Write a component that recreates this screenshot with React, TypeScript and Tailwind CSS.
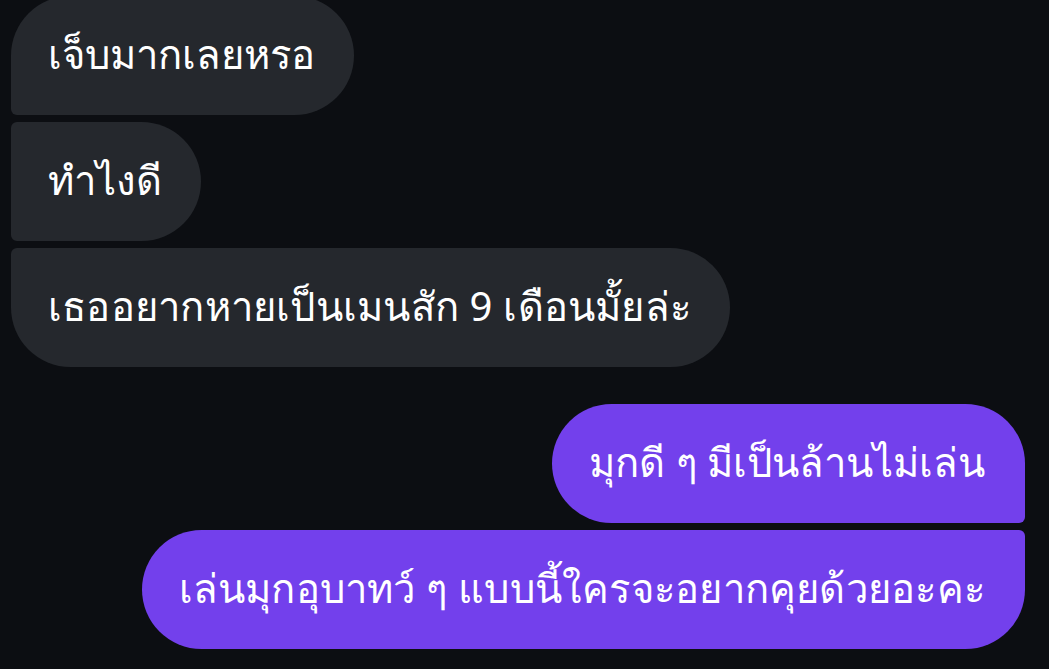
type Bubble = {
  text: string;
  mine: boolean;
  corners: string;
  loose?: boolean;
};

const thread: Bubble[] = [
  { text: "เจ็บมากเลยหรอ", mine: false, corners: "rounded-[60px] rounded-bl-[6px]" },
  { text: "ทำไงดี", mine: false, corners: "rounded-[60px] rounded-tl-[6px] rounded-bl-[6px]" },
  { text: "เธออยากหายเป็นเมนสัก 9 เดือนมั้ยล่ะ", mine: false, corners: "rounded-[60px] rounded-tl-[6px]", loose: true },
  { text: "มุกดี ๆ มีเป็นล้านไม่เล่น", mine: true, corners: "rounded-[60px] rounded-br-[6px]" },
  { text: "เล่นมุกอุบาทว์ ๆ แบบนี้ใครจะอยากคุยด้วยอะคะ", mine: true, corners: "rounded-[60px] rounded-tr-[6px]", loose: true },
];

function MessageBubble({ b }: { b: Bubble }) {
  return (
    <div
      className={[
        "flex h-[119px] items-center pl-[37px] text-[40px] leading-none text-white whitespace-nowrap",
        b.corners,
        b.mine ? "self-end bg-[#7340ec] pr-[40px]" : "self-start bg-[#25282d] pr-[39px]",
        b.loose ? "tracking-[0.22px]" : "",
      ].join(" ")}
    >
      <span className="pb-[4px]">{b.text}</span>
    </div>
  );
}

export default function App() {
  return (
    <div className="h-[669px] overflow-hidden bg-[#0c0e12] font-['Noto_Sans',sans-serif]">
      <div className="-mt-[4px] flex flex-col pl-[11px] pr-[24px]">
        <div className="flex flex-col gap-[7px]">
          {thread.slice(0, 3).map((b, i) => (
            <MessageBubble key={i} b={b} />
          ))}
        </div>
        <div className="mt-[37px] flex flex-col gap-[7px]">
          {thread.slice(3).map((b, i) => (
            <MessageBubble key={i} b={b} />
          ))}
        </div>
      </div>
    </div>
  );
}
